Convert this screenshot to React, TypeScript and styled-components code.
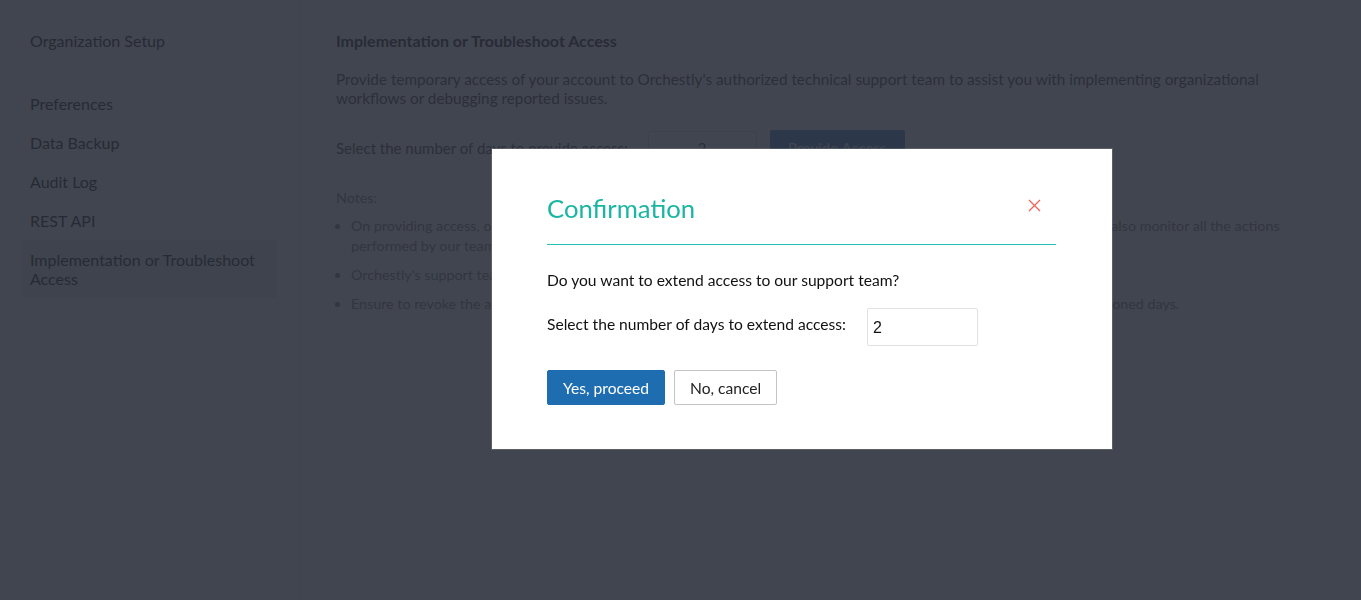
import React, {useState} from 'react';
import styled, {createGlobalStyle} from 'styled-components';

const GlobalStyle = createGlobalStyle`
    html, body {
        margin: 0;
        padding: 0;
        background: #ffffff;
        font-family: Lato, "Open Sans", "Liberation Sans", sans-serif;
        color: #333;
    }
    * {
        box-sizing: border-box;
    }
`;

const Layout = styled.div`
    display: grid;
    grid-template-columns: 300px 1fr;
    min-height: 100vh;
`;

const Sidebar = styled.nav`
    background: #fcfcfd;
    border-right: 1px solid #eef0f2;
    padding: 31px 0 0;
    display: flex;
    flex-direction: column;
`;

const SideTitle = styled.div`
    font-size: 16px;
    line-height: 20px;
    color: #333;
    padding: 0 30px;
    margin-bottom: 33px;
`;

const SideItem = styled.div<{active?: boolean}>`
    font-size: 16px;
    line-height: 19px;
    color: #333;
    margin: 0 22px;
    padding: 10px 8px;
    border-radius: 3px;
    background: ${(p) => (p.active ? '#e9eef5' : 'transparent')};
`;

const Main = styled.main`
    padding: 31px 60px 0 36px;
    display: flex;
    flex-direction: column;
`;

const Heading = styled.h2`
    margin: 0;
    font-size: 16px;
    line-height: 20px;
    font-weight: 700;
    color: #3a3a3a;
`;

const Lead = styled.p`
    margin: 19px 0 0;
    font-size: 15.3px;
    line-height: 19px;
    color: #555;
`;

const AccessRow = styled.div`
    display: flex;
    align-items: center;
    margin-top: 22px;
    height: 35px;
    font-size: 15px;
    color: #555;
`;

const DaysBox = styled.div`
    margin-left: 20px;
    width: 109px;
    height: 33px;
    border: 1px solid #dde0e4;
    border-radius: 2px;
    display: flex;
    align-items: center;
    justify-content: center;
    font-size: 15px;
    color: #555;
`;

const ProvideButton = styled.button`
    margin-left: 13px;
    height: 35px;
    width: 135px;
    border: none;
    border-radius: 2px;
    background: #5e97cf;
    color: #fff;
    font-family: inherit;
    font-size: 15px;
`;

const NotesLabel = styled.div`
    margin-top: 23px;
    font-size: 14.3px;
    line-height: 20px;
    color: #888;
`;

const NotesList = styled.ul`
    margin: 8px 0 0;
    padding: 0 0 0 15px;
    display: flex;
    flex-direction: column;
    gap: 9px;
`;

const Note = styled.li`
    font-size: 14.3px;
    line-height: 20px;
    color: #888;
`;

const Overlay = styled.div`
    position: fixed;
    inset: 0;
    background: rgba(37, 41, 53, 0.87);
    display: flex;
    align-items: flex-start;
    padding: 149px 0 0 492px;
`;

const Modal = styled.div`
    width: 620px;
    background: #fff;
    padding: 44px 56px 44px 55px;
    box-shadow: 0 0 0 1px rgba(255, 255, 255, 0.15);
`;

const ModalHeader = styled.div`
    display: flex;
    align-items: flex-start;
    justify-content: space-between;
    padding-bottom: 21px;
    border-bottom: 1px solid #22c2b2;
`;

const ModalTitle = styled.h3`
    margin: 0;
    font-size: 25.7px;
    line-height: 30px;
    font-weight: 400;
    color: #1bb5a4;
`;

const CloseButton = styled.button`
    border: none;
    background: none;
    padding: 0;
    margin: 5px 15px 0 0;
    width: 14px;
    height: 14px;
    display: flex;
    align-items: center;
    justify-content: center;
    cursor: pointer;
`;

const Question = styled.p`
    margin: 25px 0 0;
    font-size: 15.6px;
    line-height: 20px;
    color: #111;
`;

const FieldRow = styled.label`
    display: flex;
    align-items: center;
    margin-top: 18px;
    font-size: 15.6px;
    color: #111;
`;

const FieldText = styled.span`
    line-height: 20px;
    padding-bottom: 6px;
`;

const DaysInput = styled.input`
    margin-left: 21px;
    width: 111px;
    height: 38px;
    border: 1px solid #e2e2e2;
    border-radius: 2px;
    padding: 2px 5px 0;
    font-family: "Liberation Sans", Arial, sans-serif;
    font-size: 16px;
    color: #111;
    outline: none;
`;

const Actions = styled.div`
    display: flex;
    gap: 9px;
    margin-top: 24px;
`;

const ActionButton = styled.button<{primary?: boolean}>`
    height: 35px;
    padding: 0 15px;
    border-radius: 2px;
    font-family: inherit;
    font-size: 15.6px;
    cursor: pointer;
    border: 1px solid ${(p) => (p.primary ? '#1d6cb0' : '#c4c4c4')};
    background: ${(p) => (p.primary ? '#1f6db1' : '#fff')};
    color: ${(p) => (p.primary ? '#fff' : '#222')};
`;

const menu = ['Preferences', 'Data Backup', 'Audit Log', 'REST API', 'Implementation or Troubleshoot Access'];

export default function App() {
    const [days, setDays] = useState('2');

    return (
        <>
            <GlobalStyle/>
            <Layout>
                <Sidebar>
                    <SideTitle>Organization Setup</SideTitle>
                    {menu.map((item, i) => (
                        <SideItem
                            key={item}
                            active={i === menu.length - 1}
                        >
                            {item}
                        </SideItem>
                    ))}
                </Sidebar>
                <Main>
                    <Heading>Implementation or Troubleshoot Access</Heading>
                    <Lead>
                        Provide temporary access of your account to Orchestly's authorized technical support team to assist you with implementing organizational workflows or debugging reported issues.
                    </Lead>
                    <AccessRow>
                        Select the number of days to provide access:
                        <DaysBox>2</DaysBox>
                        <ProvideButton>Provide Access</ProvideButton>
                    </AccessRow>
                    <NotesLabel>Notes:</NotesLabel>
                    <NotesList>
                        <Note>
                            On providing access, our technical support team will be able to access your account with administrator privileges. You can also monitor all the actions performed by our team in the Audit Log.
                        </Note>
                        <Note>
                            Orchestly's support team will not be able to access your account once the access period expires.
                        </Note>
                        <Note>
                            Ensure to revoke the access once the work is complete, otherwise the access will be automatically revoked after the mentioned days.
                        </Note>
                    </NotesList>
                </Main>
            </Layout>
            <Overlay>
                <Modal>
                    <ModalHeader>
                        <ModalTitle>Confirmation</ModalTitle>
                        <CloseButton aria-label='Close'>
                            <svg
                                width='13'
                                height='13'
                                viewBox='0 0 13 13'
                            >
                                <path
                                    d='M1 1L12 12M12 1L1 12'
                                    stroke='#f2625a'
                                    strokeWidth='1.3'
                                    fill='none'
                                />
                            </svg>
                        </CloseButton>
                    </ModalHeader>
                    <Question>Do you want to extend access to our support team?</Question>
                    <FieldRow>
                        <FieldText>Select the number of days to extend access:</FieldText>
                        <DaysInput
                            value={days}
                            onChange={(e) => setDays(e.target.value)}
                        />
                    </FieldRow>
                    <Actions>
                        <ActionButton primary>Yes, proceed</ActionButton>
                        <ActionButton>No, cancel</ActionButton>
                    </Actions>
                </Modal>
            </Overlay>
        </>
    );
}
